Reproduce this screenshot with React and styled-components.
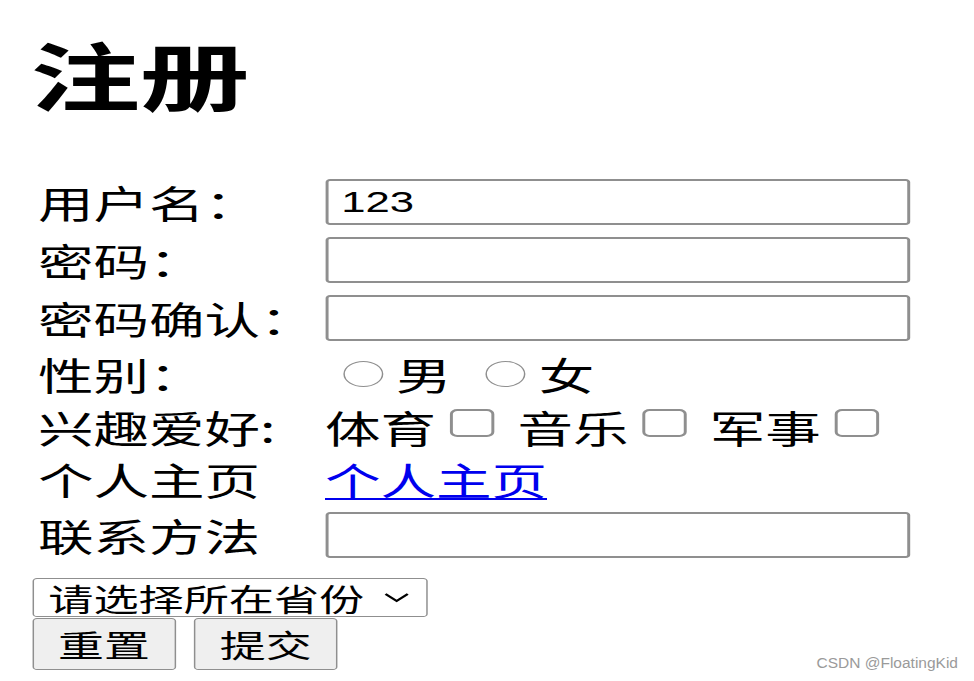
import React from "react";
import styled, { createGlobalStyle } from "styled-components";

const STRETCH = 1.48;

const GlobalStyle = createGlobalStyle`
  html, body { margin: 0; padding: 0; background: #fff; overflow: hidden; }
  body { font-family: "Noto Sans CJK SC", "Noto Sans", sans-serif; color: #000; }
`;

const Viewport = styled.div`
  position: relative;
  width: 974px;
  height: 681px;
  overflow: hidden;
`;

const Page = styled.div`
  width: ${974 / STRETCH}px;
  transform: scaleX(${STRETCH});
  transform-origin: 0 0;
  padding: 37px 0 0 21.6px;
  box-sizing: border-box;
  display: flex;
  flex-direction: column;
  align-items: flex-start;
`;

const Title = styled.h1`
  margin: 0 0 64px -1px;
  height: 72px;
  font-size: 74px;
  line-height: 72px;
  font-weight: 700;
`;

const Form = styled.div`
  display: flex;
  flex-direction: column;
  align-self: stretch;
  margin-left: 4px;
`;

const FieldRow = styled.div`
  display: flex;
  align-items: center;
  height: ${(p) => p.$h}px;
`;

const Label = styled.div`
  width: 194px;
  flex: none;
  font-size: 37.5px;
  line-height: 38px;
  white-space: nowrap;
`;

const Field = styled.div`
  display: flex;
  align-items: center;
  flex: 1;
  font-size: 37.5px;
  line-height: 38px;
  white-space: nowrap;
`;

const TextInput = styled.input`
  width: 395px;
  height: 46px;
  box-sizing: border-box;
  border: 2px solid #8f8f8f;
  border-radius: 3px;
  padding: 0 7px 0 9px;
  margin: 0;
  font: 29.5px "Liberation Sans", Arial, sans-serif;
  color: #000;
  background: #fff;
  outline: none;
`;

const ChoiceGroup = styled.div`
  display: flex;
  align-items: center;
  gap: ${(p) => p.$gap}px;
`;

const Choice = styled.label`
  display: flex;
  align-items: center;
`;

const Radio = styled.input.attrs({ type: "radio" })`
  appearance: none;
  width: 27px;
  height: 26px;
  box-sizing: border-box;
  border: 1.5px solid #8f8f8f;
  border-radius: 50%;
  margin: 0 9px 0 12px;
  background: #fff;
`;

const Checkbox = styled.input.attrs({ type: "checkbox" })`
  appearance: none;
  width: 30px;
  height: 28px;
  box-sizing: border-box;
  border: 2px solid #8f8f8f;
  border-radius: 5px;
  margin: 0 0 8px 9px;
  background: #fff;
`;

const HomeLink = styled.a`
  color: #0000ee;
  text-decoration: underline;
  text-decoration-thickness: 2px;
  text-underline-offset: 3px;
`;

const SelectBox = styled.div`
  position: relative;
  margin-top: 13px;
  width: 267.6px;
  height: 39px;
`;

const Select = styled.select`
  appearance: none;
  width: 100%;
  height: 100%;
  box-sizing: border-box;
  border: 1.5px solid #8f8f8f;
  border-radius: 3px;
  background: #fff;
  color: #000;
  padding: 0 0 0 10px;
  margin: 0;
  font-family: "Noto Sans CJK SC", sans-serif;
  font-size: 30.5px;
  line-height: 36px;
  outline: none;
`;

const Chevron = styled.svg`
  position: absolute;
  left: 237px;
  top: 14px;
  width: 18px;
  height: 11px;
  pointer-events: none;
`;

const ButtonRow = styled.div`
  display: flex;
  gap: 12px;
  margin-top: 1px;
`;

const Button = styled.button`
  width: 97.3px;
  height: 52px;
  box-sizing: border-box;
  padding: 0;
  margin: 0;
  border: 1.5px solid #8f8f8f;
  border-radius: 3px;
  background: #efefef;
  color: #000;
  font-family: "Noto Sans CJK SC", sans-serif;
  font-size: 31px;
  line-height: 36px;
`;

const Watermark = styled.div`
  position: absolute;
  right: 16px;
  bottom: 9px;
  font-family: "Liberation Sans", Arial, sans-serif;
  font-size: 15.5px;
  line-height: 18px;
  color: #9a9a9a;
  white-space: nowrap;
`;

export default function App() {
  return (
    <Viewport>
      <GlobalStyle />
      <Page>
        <Title>注册</Title>
        <Form>
          <FieldRow $h={58}>
            <Label>用户名：</Label>
            <Field>
              <TextInput type="text" defaultValue="123" />
            </Field>
          </FieldRow>
          <FieldRow $h={58}>
            <Label>密码：</Label>
            <Field>
              <TextInput type="password" />
            </Field>
          </FieldRow>
          <FieldRow $h={58}>
            <Label>密码确认：</Label>
            <Field>
              <TextInput type="password" />
            </Field>
          </FieldRow>
          <FieldRow $h={54}>
            <Label>性别：</Label>
            <Field>
              <ChoiceGroup $gap={11}>
                <Choice>
                  <Radio name="sex" />男
                </Choice>
                <Choice>
                  <Radio name="sex" />女
                </Choice>
              </ChoiceGroup>
            </Field>
          </FieldRow>
          <FieldRow $h={52}>
            <Label>兴趣爱好:</Label>
            <Field>
              <ChoiceGroup $gap={16}>
                <Choice>
                  体育<Checkbox />
                </Choice>
                <Choice>
                  音乐<Checkbox />
                </Choice>
                <Choice>
                  军事<Checkbox />
                </Choice>
              </ChoiceGroup>
            </Field>
          </FieldRow>
          <FieldRow $h={52}>
            <Label>个人主页</Label>
            <Field>
              <HomeLink href="#">个人主页</HomeLink>
            </Field>
          </FieldRow>
          <FieldRow $h={60}>
            <Label>联系方法</Label>
            <Field>
              <TextInput type="text" />
            </Field>
          </FieldRow>
        </Form>
        <SelectBox>
          <Select defaultValue="">
            <option value="">请选择所在省份</option>
          </Select>
          <Chevron viewBox="0 0 18 11">
            <path d="M1.5 2 L9 9 L16.5 2" fill="none" stroke="#000" strokeWidth="1.8" />
          </Chevron>
        </SelectBox>
        <ButtonRow>
          <Button type="reset">重置</Button>
          <Button type="button">提交</Button>
        </ButtonRow>
      </Page>
      <Watermark>CSDN @FloatingKid</Watermark>
    </Viewport>
  );
}
